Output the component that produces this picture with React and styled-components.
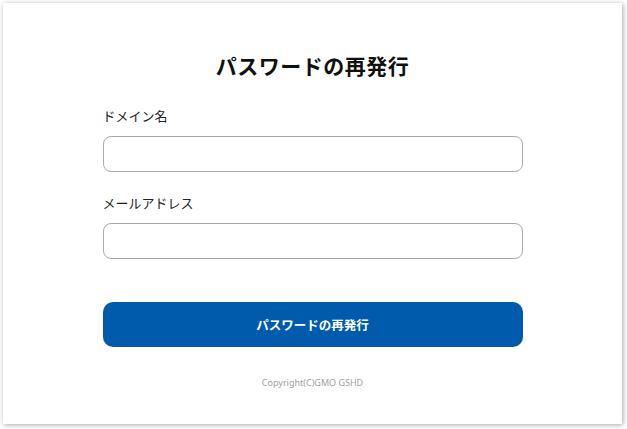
import styled, { createGlobalStyle } from "styled-components";

const GlobalStyle = createGlobalStyle`
  html, body {
    margin: 0;
    padding: 0;
    background: #ffffff;
  }
  body {
    font-family: "Noto Sans CJK JP", "Noto Sans", sans-serif;
    color: #111;
  }
`;

const Page = styled.div`
  padding: 3px 5px 5px 3px;
  box-sizing: border-box;
  width: 627px;
  height: 429px;
`;

const Card = styled.main`
  background: #fff;
  height: 100%;
  box-shadow: 1px 1px 5px rgba(0, 0, 0, 0.35);
  display: flex;
  flex-direction: column;
  align-items: center;
  padding-top: 45px;
  box-sizing: border-box;
`;

const Title = styled.h1`
  margin: 0 0 23px;
  font-size: 21px;
  font-weight: 700;
  line-height: 34px;
  letter-spacing: 0.5px;
`;

const Form = styled.form`
  width: 420px;
  display: flex;
  flex-direction: column;
`;

const Field = styled.label`
  display: flex;
  flex-direction: column;
  gap: 9px;
  margin-bottom: ${(p) => p.$mb || 0}px;
`;

const LabelText = styled.span`
  font-size: 13px;
  line-height: 22px;
  color: #222;
`;

const Input = styled.input`
  box-sizing: border-box;
  height: 36px;
  width: 100%;
  border: 1px solid #a9a9a9;
  border-radius: 8px;
  font-size: 14px;
  padding: 0 10px;
  outline: none;
`;

const Submit = styled.button`
  margin-top: 43px;
  height: 45px;
  border: none;
  border-radius: 10px;
  background: #005bac;
  color: #fff;
  font-family: "Noto Sans CJK JP", sans-serif;
  font-size: 12.5px;
  font-weight: 700;
  cursor: pointer;
`;

const Copyright = styled.footer`
  margin-top: 29px;
  font-family: "Noto Sans", "Open Sans", sans-serif;
  font-size: 9px;
  color: #a0a0a0;
  line-height: 14px;
`;

export default function App() {
  return (
    <>
      <GlobalStyle />
      <Page>
        <Card>
          <Title>パスワードの再発行</Title>
          <Form onSubmit={(e) => e.preventDefault()}>
            <Field $mb={20}>
              <LabelText>ドメイン名</LabelText>
              <Input type="text" />
            </Field>
            <Field>
              <LabelText>メールアドレス</LabelText>
              <Input type="email" />
            </Field>
            <Submit type="submit">パスワードの再発行</Submit>
          </Form>
          <Copyright>Copyright(C)GMO GSHD</Copyright>
        </Card>
      </Page>
    </>
  );
}
